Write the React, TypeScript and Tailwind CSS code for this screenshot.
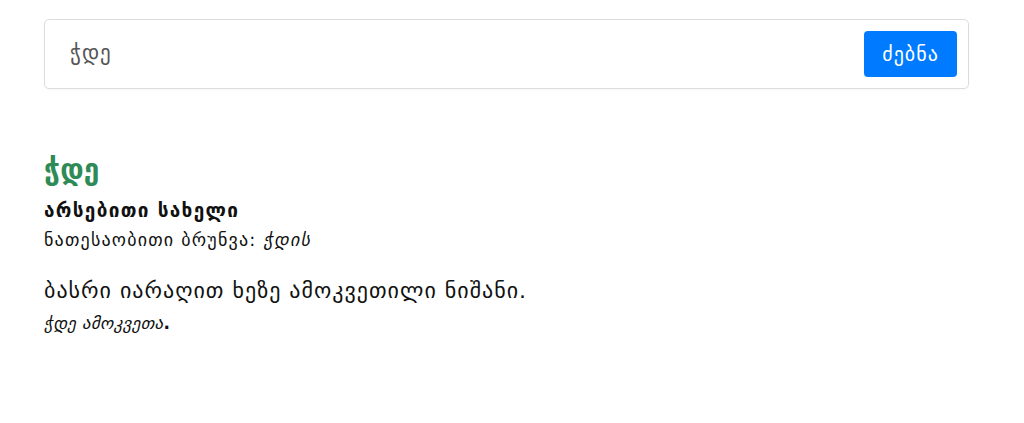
import React from 'react';

const App = () => {
  return (
    <div className="min-h-[423px] bg-white" style={{ fontFamily: '"DejaVu Sans", "Noto Sans", sans-serif' }}>
      <div className="ml-[44px] w-[925px] pt-[19px]">
        {/* Search bar */}
        <div className="flex items-center border border-[#dcdcdc] rounded-[5px] p-[11px] pl-[25px] shadow-[0_1px_2px_rgba(0,0,0,0.03)]">
          <input
            className="flex-1 outline-none text-[21px] tracking-[1px] text-[#555] bg-transparent"
            defaultValue="ჭდე"
          />
          <button className="w-[93px] h-[46px] bg-[#007bff] text-white text-[20px] tracking-[1px] rounded-[4px]">
            ძებნა
          </button>
        </div>

        {/* Entry */}
        <div className="mt-[64px] text-[#111]">
          <h1 className="text-[28px] font-bold text-[#2e8b57] leading-[34px] tracking-[0.3px]">ჭდე</h1>
          <div className="mt-[11px] text-[19px] font-bold leading-[24px] tracking-[1.3px]">არსებითი სახელი</div>
          <div className="mt-[6px] text-[18px] leading-[24px] tracking-[1.2px]">
            ნათესაობითი ბრუნვა: <i>ჭდის</i>
          </div>
          <div className="mt-[25px] text-[22px] leading-[28px] tracking-[1px]">
            ბასრი იარაღით ხეზე ამოკვეთილი ნიშანი.
          </div>
          <div className="mt-[7px] text-[17px] leading-[22px] italic tracking-[0.3px]">
            ჭდე ამოკვეთა<b className="not-italic">.</b>
          </div>
        </div>
      </div>
    </div>
  );
};

export default App;
